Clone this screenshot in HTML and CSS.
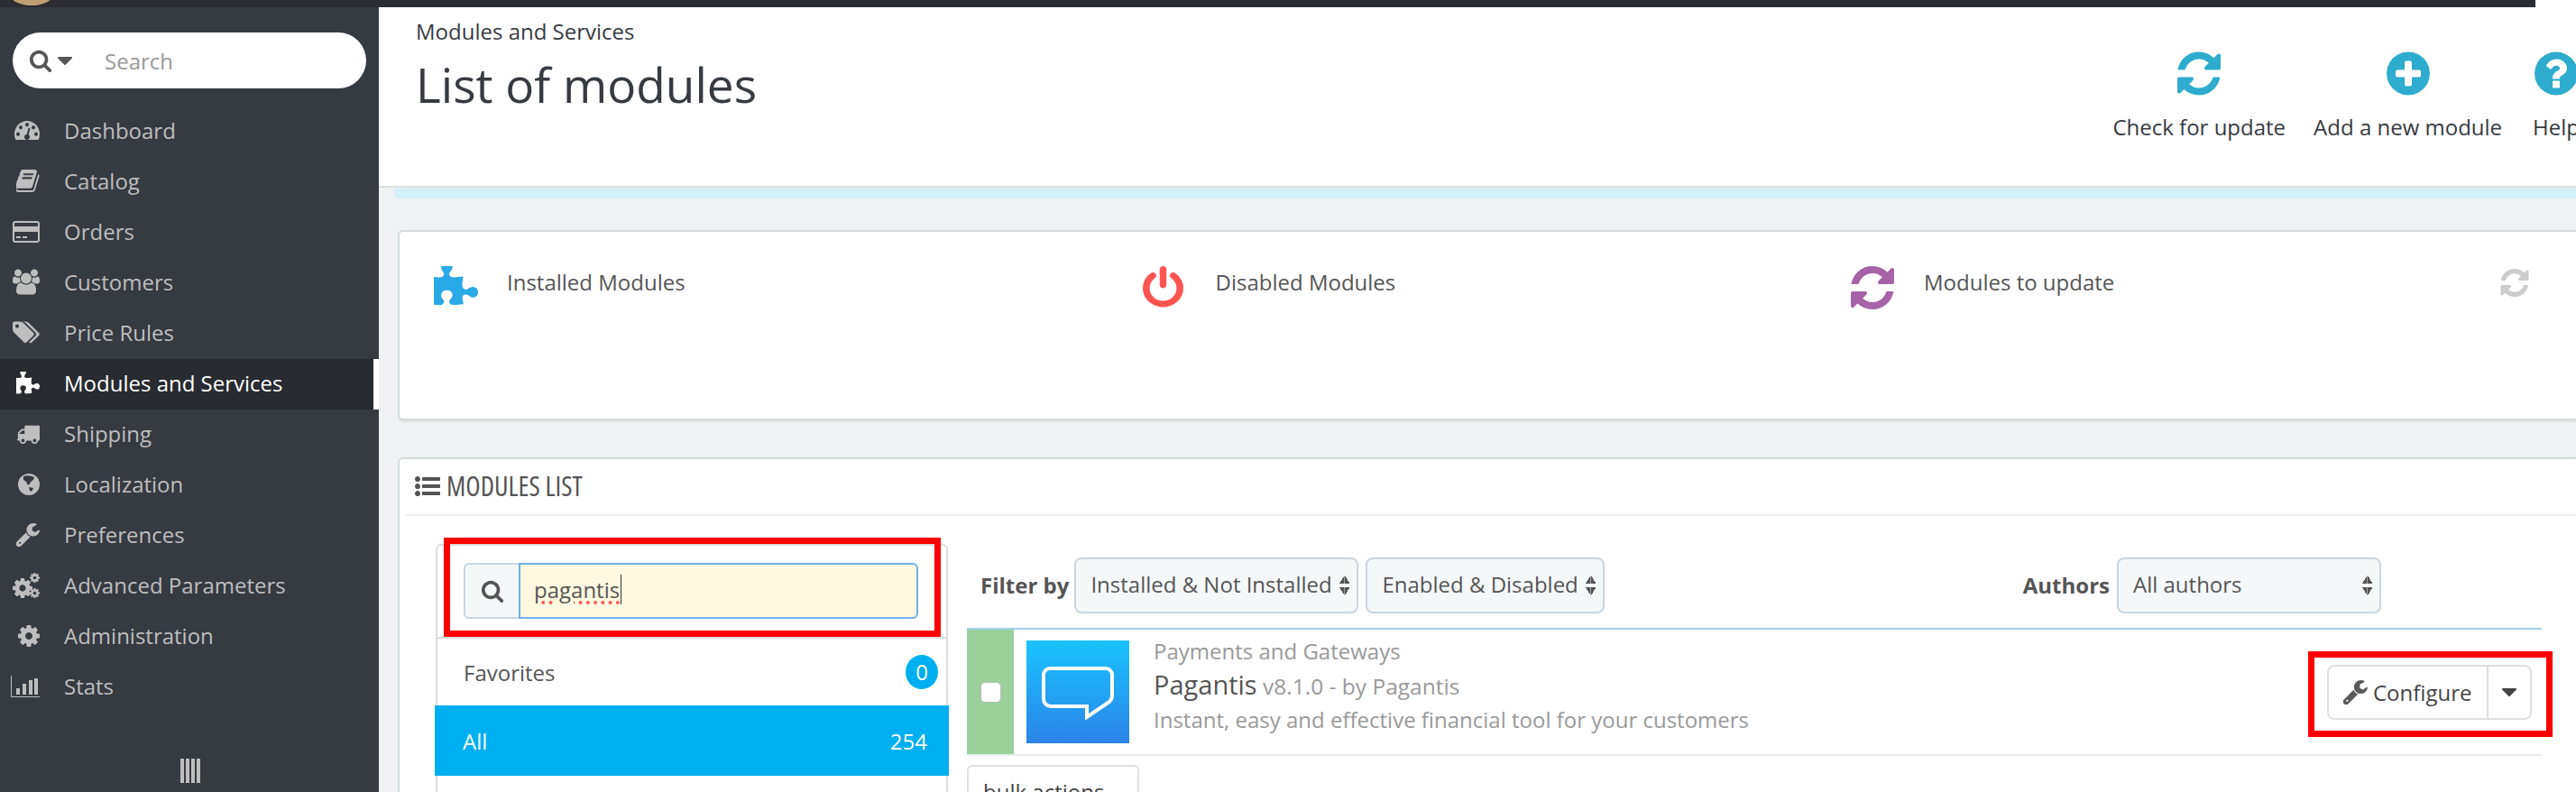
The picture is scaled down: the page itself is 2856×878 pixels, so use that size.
FILE: index.html

```html
<!DOCTYPE html>
<html>
<head>
<meta name="viewport" content="width=device-width, initial-scale=1">
<title>List of modules</title>
<link rel="stylesheet" href="styles.css">
</head>
<body>

<svg class="sprite" xmlns="http://www.w3.org/2000/svg">
  <symbol id="i-search" viewBox="0 0 1792 1792"><path d="M1216 832q0-185-131.500-316.500t-316.500-131.500-316.500 131.500-131.500 316.500 131.500 316.500 316.500 131.500 316.500-131.500 131.500-316.500zm512 832q0 52-38 90t-90 38q-54 0-90-38l-343-342q-179 124-399 124-143 0-273.500-55.500t-225-150-150-225-55.500-273.500 55.500-273.500 150-225 225-150 273.500-55.500 273.500 55.500 225 150 150 225 55.500 273.500q0 220-124 399l343 343q37 37 37 90z"/></symbol>
  <symbol id="i-caret" viewBox="384 640 1024 576"><path d="M1408 704q0 26-19 45l-448 448q-19 19-45 19t-45-19l-448-448q-19-19-19-45t19-45 45-19h896q26 0 45 19t19 45z"/></symbol>
  <symbol id="i-refresh" viewBox="128 128 1536 1536"><path d="M1639 1056q0 5-1 7-64 268-268 434.500t-478 166.500q-146 0-282.500-55t-243.500-157l-129 129q-19 19-45 19t-45-19-19-45v-448q0-26 19-45t45-19h448q26 0 45 19t19 45-19 45l-137 137q71 66 161 102t187 36q134 0 250-65t186-179q11-17 53-117 8-23 30-23h192q13 0 22.500 9.500t9.500 22.500zm25-800v448q0 26-19 45t-45 19h-448q-26 0-45-19t-19-45 19-45l138-138q-148-137-349-137-134 0-250 65t-186 179q-11 17-53 117-8 23-30 23h-199q-13 0-22.500-9.500t-9.500-22.500v-7q65-268 270-434.500t480-166.500q146 0 284 55.500t245 156.500l130-129q19-19 45-19t45 19 19 45z"/></symbol>
  <symbol id="i-plus" viewBox="128 128 1536 1536"><path d="M1344 960v-128q0-26-19-45t-45-19h-256v-256q0-26-19-45t-45-19h-128q-26 0-45 19t-19 45v256h-256q-26 0-45 19t-19 45v128q0 26 19 45t45 19h256v256q0 26 19 45t45 19h128q26 0 45-19t19-45v-256h256q26 0 45-19t19-45zm320-64q0 209-103 385.500t-279.500 279.500-385.500 103-385.500-103-279.500-279.500-103-385.500 103-385.500 279.500-279.500 385.500-103 385.500 103 279.500 279.500 103 385.500z"/></symbol>
  <symbol id="i-help" viewBox="128 128 1536 1536"><path d="M1024 1376v-192q0-14-9-23t-23-9h-192q-14 0-23 9t-9 23v192q0 14 9 23t23 9h192q14 0 23-9t9-23zm256-672q0-88-55.500-163t-138.500-116-170-41q-243 0-371 213-15 24 8 42l132 100q7 6 19 6 16 0 25-12 53-68 86-92 34-24 86-24 48 0 85.500 26t37.500 59q0 38-20 61t-68 45q-63 28-115.500 86.500t-52.500 125.500v36q0 14 9 23t23 9h192q14 0 23-9t9-23q0-19 21.500-49.500t54.500-49.500q32-18 49-28.500t46-35 44.500-48 28-60.500 12.500-81zm384 192q0 209-103 385.500t-279.500 279.500-385.500 103-385.500-103-279.500-279.500-103-385.500 103-385.500 279.500-279.500 385.500-103 385.500 103 279.500 279.500 103 385.500z"/></symbol>
  <symbol id="i-wrench" viewBox="128 128 1600 1600"><path d="M448 1472q0-26-19-45t-45-19-45 19-19 45 19 45 45 19 45-19 19-45zm644-420l-682 682q-37 37-90 37-52 0-91-37l-106-108q-38-36-38-90 0-53 38-91l681-681q39 98 114.500 173.500t173.500 114.500zm634-435q0 39-23 106-47 134-164.500 217.500t-258.500 83.500q-185 0-316.500-131.500t-131.500-316.500 131.500-316.500 316.500-131.500q58 0 121.500 16.500t107.500 46.500q16 11 16 28t-16 28l-293 169v224l193 107q5-3 79-48.500t135.500-81 70.500-35.500q15 0 23.500 10t8.500 25z"/></symbol>
  <symbol id="i-puzzle" viewBox="128 128 1536 1536" preserveAspectRatio="none"><path d="M1664 1098q0 81-44.500 135t-123.500 54q-41 0-77.500-17.500t-59-38-56.500-38-71-17.500q-110 0-110 124 0 39 16 115t15 115v5q-22 0-33 1-34 3-97.500 11.500t-115.500 13.500-98 5q-61 0-103-26.500t-42-83.500q0-37 17.500-71t38-56.500 38-59 17.500-77.500q0-79-54-123.500t-135-44.500q-84 0-143 45.500t-59 127.500q0 43 15 83t33.500 64.500 33.500 53 15 50.500q0 45-46 89-37 35-117 35-95 0-245-24-9-2-27.500-4t-27.500-4l-13-2q-1 0-3-1-2 0-2-1v-1024q2 1 17.500 3.500t34 5 21.500 3.500q150 24 245 24 80 0 117-35 46-44 46-89 0-22-15-50.500t-33.500-53-33.500-64.500-15-83q0-82 59-127.500t144-45.500q80 0 134 44.500t54 123.500q0 41-17.500 77.500t-38 59-38 56.500-17.500 71q0 57 42 83.500t103 26.500q64 0 180-15t163-17v2q-1 2-3.500 17.500t-5 34-3.500 21.500q-24 150-24 245 0 80 35 117 44 46 89 46 22 0 50.500-15t53-33.500 64.500-33.500 83-15q82 0 127.500 59t45.500 143z"/></symbol>
  <symbol id="i-power" viewBox="128 0 1536 1792" preserveAspectRatio="none"><path d="M1664 896q0 156-61 298t-164 245-245 164-298 61-298-61-245-164-164-245-61-298q0-182 80.500-343t226.500-270q43-32 95.500-25t83.500 50q32 42 24.500 94.500t-49.500 84.500q-98 74-151.500 181t-53.500 228q0 104 40.500 198.500t109.500 163.500 163.500 109.500 198.500 40.500 198.500-40.500 163.500-109.500 109.500-163.500 40.500-198.500q0-121-53.500-228t-151.500-181q-42-32-49.500-84.500t24.500-94.500q31-43 84-50t95 25q146 109 226.500 270t80.500 343zm-640-768v640q0 52-38 90t-90 38-90-38-38-90v-640q0-52 38-90t90-38 90 38 38 90z"/></symbol>
  <symbol id="i-list" viewBox="0 192 1792 1408" preserveAspectRatio="none"><path d="M384 1408q0 80-56 136t-136 56-136-56-56-136 56-136 136-56 136 56 56 136zm0-512q0 80-56 136t-136 56-136-56-56-136 56-136 136-56 136 56 56 136zm1408 416v192q0 13-9.500 22.500t-22.500 9.500h-1216q-13 0-22.500-9.500t-9.500-22.500v-192q0-13 9.500-22.500t22.500-9.500h1216q13 0 22.500 9.500t9.500 22.500zm-1408-928q0 80-56 136t-136 56-136-56-56-136 56-136 136-56 136 56 56 136zm1408 416v192q0 13-9.500 22.500t-22.500 9.500h-1216q-13 0-22.500-9.500t-9.500-22.500v-192q0-13 9.500-22.500t22.500-9.500h1216q13 0 22.500 9.500t9.500 22.500zm0-512v192q0 13-9.500 22.500t-22.500 9.500h-1216q-13 0-22.500-9.500t-9.500-22.500v-192q0-13 9.500-22.500t22.500-9.500h1216q13 0 22.500 9.500t9.500 22.500z"/></symbol>
  <symbol id="i-dash" viewBox="0 256 1792 1280" preserveAspectRatio="none"><path d="M384 1152q0-53-37.500-90.500t-90.500-37.500-90.500 37.500-37.500 90.500 37.500 90.500 90.500 37.500 90.500-37.500 37.500-90.500zm192-448q0-53-37.500-90.500t-90.500-37.500-90.500 37.500-37.500 90.500 37.500 90.500 90.500 37.500 90.500-37.500 37.500-90.500zm428 481l101-382q6-26-7.500-48.500t-38.500-29.500-48 6.500-30 39.500l-101 382q-60 5-107 43.500t-63 98.500q-20 77 20 146t117 89 146-20 89-117q16-60-6-117t-72-91zm660-33q0-53-37.500-90.500t-90.500-37.500-90.500 37.500-37.500 90.500 37.500 90.500 90.500 37.500 90.500-37.500 37.500-90.500zm-640-640q0-53-37.500-90.500t-90.500-37.500-90.500 37.500-37.500 90.500 37.500 90.500 90.500 37.500 90.500-37.500 37.500-90.500zm448 192q0-53-37.500-90.500t-90.500-37.500-90.500 37.500-37.500 90.500 37.500 90.500 90.500 37.500 90.500-37.500 37.500-90.500zm320 448q0 261-141 483-19 29-54 29h-1402q-35 0-54-29-141-221-141-483 0-182 71-348t191-286 286-191 348-71 348 71 286 191 191 286 71 348z"/></symbol>
  <symbol id="i-book" viewBox="128 128 1536 1536"><path d="M1639 478q40 57 18 129l-275 906q-19 64-76.500 107.500t-122.500 43.500h-923q-77 0-148.500-53.500t-99.500-131.500q-24-67-2-127 0-4 3-27t4-37q1-8-3-21.500t-3-19.500q2-11 8-21t16.500-23.500 16.500-23.500q23-38 45-91.500t30-91.500q3-10 .5-30t-.5-28q3-11 17-28t17-23q21-36 42-92t25-90q1-9-2.500-32t.5-28q4-13 22-30.500t22-22.500q19-26 42.500-84.500t27.500-96.500q1-8-3-25.500t-2-26.500q2-8 9-18t18-23 17-21q8-12 16.500-30.500t15-35 16-36 19.500-32 26.500-23.500 36-11.500 47.500 5.500l-1 3q38-9 51-9h761q74 0 114 56t18 130l-274 906q-36 119-71.500 153.500t-128.500 34.500h-869q-27 0-38 15-11 16-1 43 24 70 144 70h923q29 0 56-15.500t35-41.500l300-987q7-22 5-57 38 15 59 43zm-1064 2q-4 13 2 22.500t20 9.500h608q13 0 25.500-9.500t16.500-22.500l21-64q4-13-2-22.500t-20-9.500h-608q-13 0-25.500 9.500t-16.500 22.500zm-83 256q-4 13 2 22.500t20 9.500h608q13 0 25.500-9.500t16.500-22.500l21-64q4-13-2-22.500t-20-9.500h-608q-13 0-25.500 9.500t-16.500 22.500z"/></symbol>
  <symbol id="i-users" viewBox="0 128 1920 1536"><path d="M593 896q-162 5-265 128h-134q-82 0-138-40.500t-56-118.500q0-353 124-353 6 0 43.500 21t97.500 42.500 119 21.500q67 0 133-23-5 37-5 66 0 139 81 256zm1071 637q0 120-73 189.500t-194 69.500h-874q-121 0-194-69.500t-73-189.500q0-53 3.500-103.500t14-109 26.500-108.500 43-97.500 62-81 85.500-53.500 111.500-20q10 0 43 21.500t73 48 107 48 135 21.500 135-21.500 107-48 73-48 43-21.500q61 0 111.500 20t85.500 53.500 62 81 43 97.500 26.500 108.500 14 109 3.500 103.500zm-1024-1277q0 106-75 181t-181 75-181-75-75-181 75-181 181-75 181 75 75 181zm704 384q0 159-112.500 271.500t-271.500 112.500-271.500-112.500-112.500-271.500 112.500-271.500 271.500-112.500 271.500 112.500 112.500 271.500zm576 225q0 78-56 118.500t-138 40.500h-134q-103-123-265-128 81-117 81-256 0-29-5-66 66 23 133 23 59 0 119-21.500t97.500-42.500 43.500-21q124 0 124 353zm-128-609q0 106-75 181t-181 75-181-75-75-181 75-181 181-75 181 75 75 181z"/></symbol>
  <symbol id="i-tags" viewBox="0 128 1920 1536"><path d="M448 448q0-53-37.500-90.500t-90.500-37.500-90.500 37.500-37.500 90.500 37.500 90.500 90.500 37.500 90.500-37.500 37.500-90.500zm1067 576q0 53-37 90l-491 492q-39 37-91 37-53 0-90-37l-715-716q-38-37-64.500-101t-26.500-117v-416q0-52 38-90t90-38h416q53 0 117 26.500t102 64.500l715 714q37 39 37 91zm384 0q0 53-37 90l-491 492q-39 37-91 37-36 0-59-14t-53-45l470-470q37-37 37-90 0-52-37-91l-715-714q-38-38-102-64.500t-117-26.500h224q53 0 117 26.500t102 64.500l715 714q37 39 37 91z"/></symbol>
  <symbol id="i-truck" viewBox="0 192 1792 1344"><path d="M640 1408q0-52-38-90t-90-38-90 38-38 90 38 90 90 38 90-38 38-90zm-384-512h384v-256h-158q-13 0-22 9l-195 195q-9 9-9 22v30zm1280 512q0-52-38-90t-90-38-90 38-38 90 38 90 90 38 90-38 38-90zm256-1088v1024q0 15-4 26.500t-13.500 18.500-16.500 11.500-23.500 6-22.500 2-25.500 0-22.500-.5q0 106-75 181t-181 75-181-75-75-181h-384q0 106-75 181t-181 75-181-75-75-181h-64q-3 0-22.500.5t-25.500 0-22.500-2-23.500-6-16.500-11.500-13.500-18.500-4-26.500q0-26 19-45t45-19v-320q0-8-.5-35t0-38 2.500-34.500 6.500-37 14-30.500 22.500-30l198-198q19-19 50.500-32t58.500-13h160v-192q0-26 19-45t45-19h1024q26 0 45 19t19 45z"/></symbol>
  <symbol id="i-cog" viewBox="128 128 1536 1536"><path id="cog-shape" d="M1152 896q0-106-75-181t-181-75-181 75-75 181 75 181 181 75 181-75 75-181zm512-109v222q0 12-8 23t-20 13l-185 28q-19 54-39 91 35 50 107 138 10 12 10 25t-9 23q-27 37-99 108t-94 71q-12 0-26-9l-138-108q-44 23-91 38-16 136-29 186-7 28-36 28h-222q-14 0-24.500-8.500t-11.500-21.500l-28-184q-49-16-90-37l-141 107q-10 9-25 9-14 0-25-11-126-114-165-168-7-10-7-23 0-12 8-23 15-21 51-66.500t54-70.500q-27-50-41-99l-183-27q-13-2-21-12.500t-8-23.500v-222q0-12 8-23t19-13l186-28q14-46 39-92-40-57-107-138-10-12-10-24 0-10 9-23 26-36 98.500-107.500t94.500-71.500q13 0 26 10l138 107q44-23 91-38 16-136 29-186 7-28 36-28h222q14 0 24.500 8.500t11.500 21.500l28 184q49 16 90 37l142-107q9-9 24-9 13 0 25 10 129 119 165 170 7 8 7 22 0 12-8 23-15 21-51 66.500t-54 70.500q26 50 41 98l183 28q13 2 21 12.500t8 23.500z"/></symbol>
  <symbol id="i-cogs" viewBox="0 0 30 28">
    <svg x="0" y="6" width="22" height="22" viewBox="128 128 1536 1536"><use href="#cog-shape"/></svg>
    <svg x="19" y="0" width="11" height="11" viewBox="128 128 1536 1536"><use href="#cog-shape"/></svg>
    <svg x="19" y="17" width="11" height="11" viewBox="128 128 1536 1536"><use href="#cog-shape"/></svg>
  </symbol>
</svg>

<div class="topbar"><span class="avatar"></span></div>

<div class="page">
  <nav class="sidebar">
    <div class="quick-search">
      <svg class="qs-icon"><use href="#i-search"/></svg>
      <svg class="qs-caret"><use href="#i-caret"/></svg>
      <span class="qs-text">Search</span>
    </div>
    <ul class="menu">
      <li class="menu-item"><span class="menu-icon"><svg width="28" height="21"><use href="#i-dash"/></svg></span>Dashboard</li>
      <li class="menu-item"><span class="menu-icon"><svg width="26" height="25"><use href="#i-book"/></svg></span>Catalog</li>
      <li class="menu-item"><span class="menu-icon">
        <svg width="30" height="24" viewBox="0 0 30 24"><rect x="1" y="1" width="28" height="22" rx="2" fill="none" stroke="currentColor" stroke-width="2"/><rect x="1" y="6" width="28" height="6"/><rect x="4" y="17" width="5" height="2"/><rect x="11" y="17" width="5" height="2"/></svg>
      </span>Orders</li>
      <li class="menu-item"><span class="menu-icon"><svg width="30" height="29"><use href="#i-users"/></svg></span>Customers</li>
      <li class="menu-item"><span class="menu-icon"><svg width="30" height="25"><use href="#i-tags"/></svg></span>Price Rules</li>
      <li class="menu-item active"><span class="menu-icon"><svg width="26" height="26"><use href="#i-puzzle"/></svg></span>Modules and Services</li>
      <li class="menu-item"><span class="menu-icon"><svg width="26" height="23"><use href="#i-truck"/></svg></span>Shipping</li>
      <li class="menu-item"><span class="menu-icon">
        <svg width="24" height="24" viewBox="0 0 24 24"><circle cx="12" cy="12" r="12"/><path class="land" d="M6 3Q12 1 18 4L17 7Q14 8 14 10L11 13L9 9L6 7ZM12 15L17 16L15 20L13 19Z"/></svg>
      </span>Localization</li>
      <li class="menu-item"><span class="menu-icon"><svg width="26" height="26"><use href="#i-wrench"/></svg></span>Preferences</li>
      <li class="menu-item"><span class="menu-icon"><svg width="30" height="28"><use href="#i-cogs"/></svg></span>Advanced Parameters</li>
      <li class="menu-item"><span class="menu-icon"><svg width="24" height="24"><use href="#i-cog"/></svg></span>Administration</li>
      <li class="menu-item"><span class="menu-icon">
        <svg width="32" height="24" viewBox="0 0 32 24"><rect x="0" y="0" width="1" height="24"/><rect x="0" y="23" width="32" height="1"/><rect x="6" y="14" width="4" height="7"/><rect x="13" y="9" width="4" height="12"/><rect x="20" y="5" width="4" height="16"/><rect x="26" y="3" width="4" height="18"/></svg>
      </span>Stats</li>
    </ul>
    <div class="collapse-handle"><i></i><i></i><i></i><i></i></div>
  </nav>

  <main class="content">
    <header class="page-head">
      <div class="page-title">
        <div class="crumb">Modules and Services</div>
        <h1>List of modules</h1>
      </div>
      <div class="toolbar">
        <a class="tool"><svg><use href="#i-refresh"/></svg>Check for update</a>
        <a class="tool"><svg><use href="#i-plus"/></svg>Add a new module</a>
        <a class="tool tool-help"><svg><use href="#i-help"/></svg>Help</a>
      </div>
    </header>
    <div class="notice"></div>

    <section class="card stats">
      <div class="stat"><svg class="stat-icon c-puzzle" width="49" height="46"><use href="#i-puzzle"/></svg><span>Installed Modules</span></div>
      <div class="stat"><svg class="stat-icon c-power" width="45" height="49"><use href="#i-power"/></svg><span>Disabled Modules</span></div>
      <div class="stat"><svg class="stat-icon c-update" width="48" height="48"><use href="#i-refresh"/></svg><span>Modules to update</span></div>
      <svg class="stat-refresh" width="32" height="31"><use href="#i-refresh"/></svg>
    </section>

    <section class="card modules">
      <h3 class="card-head"><svg width="28" height="22"><use href="#i-list"/></svg>MODULES LIST</h3>
      <div class="card-body">
        <aside class="cats">
          <div class="cats-search">
            <div class="input-group">
              <span class="addon"><svg width="26" height="26"><use href="#i-search"/></svg></span>
              <div class="search-input"><span class="typed">pagantis</span></div>
            </div>
          </div>
          <div class="cat"><span>Favorites</span><span class="badge">0</span></div>
          <div class="cat selected"><span>All</span><span>254</span></div>
        </aside>

        <div class="list">
          <div class="filters">
            <b class="filter-label">Filter by</b>
            <div class="select sel-status">Installed &amp; Not Installed<span class="updown"></span></div>
            <div class="select sel-enabled">Enabled &amp; Disabled<span class="updown"></span></div>
            <b class="filter-label authors">Authors</b>
            <div class="select sel-authors">All authors<span class="updown"></span></div>
          </div>

          <div class="module-row">
            <div class="row-check"><span class="checkbox"></span></div>
            <div class="logo">
              <svg width="114" height="114" viewBox="0 0 114 114"><path d="M26 31H88a7 7 0 0 1 7 7V62a9 9 0 0 1-3 6L67 85V73H27a8 8 0 0 1-8-8V38a7 7 0 0 1 7-7Z" fill="none" stroke="#fff" stroke-width="4"/></svg>
            </div>
            <div class="info">
              <div class="info-cat">Payments and Gateways</div>
              <div class="info-name"><span>Pagantis</span> v8.1.0 - by Pagantis</div>
              <div class="info-desc">Instant, easy and effective financial tool for your customers</div>
            </div>
            <div class="btn-group">
              <a class="btn-main"><svg width="27" height="27"><use href="#i-wrench"/></svg>Configure</a>
              <a class="btn-more"><svg width="16" height="9"><use href="#i-caret"/></svg></a>
            </div>
          </div>

          <div class="bulk">bulk actions</div>
        </div>
      </div>
    </section>
  </main>
</div>

<div class="mark mark-search"></div>
<div class="mark mark-configure"></div>

</body>
</html>
```

FILE: styles.css

```css
* {
    box-sizing: border-box;
}

html, body {
    margin: 0;
    height: 878px;
    overflow: hidden;
    background: #fff;
}

body {
    position: relative;
    font-family: "Open Sans", Arial, sans-serif;
    font-size: 24px;
    color: #555;
}

svg {
    fill: currentColor;
    display: block;
}

.sprite {
    position: absolute;
    width: 0;
    height: 0;
}

/* top strip */
.topbar {
    height: 8px;
    margin-right: 45px;
    background: #2b2d33;
    overflow: hidden;
    position: relative;
}

.avatar {
    position: absolute;
    left: 12px;
    top: -16px;
    width: 46px;
    height: 22px;
    border-radius: 50%;
    background: #bfa072;
}

.page {
    display: flex;
    height: 870px;
}

/* sidebar */
.sidebar {
    width: 420px;
    flex: none;
    background: #363a41;
    padding-top: 28px;
    position: relative;
    color: #bebebe;
}

.quick-search {
    margin: 0 14px;
    height: 62px;
    border-radius: 31px;
    background: #fff;
    display: flex;
    align-items: center;
    padding-left: 18px;
}

.qs-icon {
    width: 26px;
    height: 26px;
    color: #555;
}

.qs-caret {
    width: 16px;
    height: 9px;
    margin: 0 0 0 6px;
    color: #555;
}

.qs-text {
    margin-left: 36px;
    color: #999;
}

.menu {
    list-style: none;
    margin: 20px 0 0;
    padding: 0;
}

.menu-item {
    height: 56px;
    display: flex;
    align-items: center;
    padding: 0 0 3px 12px;
}

.menu-icon {
    width: 32px;
    margin-right: 27px;
    display: flex;
    justify-content: flex-end;
}

.land {
    fill: #363a41;
}

.menu-item.active {
    color: #fff;
    background: #282b30;
    border-right: 6px solid #fff;
}

.collapse-handle {
    position: absolute;
    left: 200px;
    top: 833px;
    display: flex;
    gap: 2px;
}

.collapse-handle i {
    width: 4px;
    height: 27px;
    background: #bebebe;
}

/* main column */
.content {
    flex: 1;
    min-width: 0;
    background: #eff1f2;
    overflow: hidden;
}

.page-head {
    height: 200px;
    background: #fff;
    border-bottom: 2px solid #ddd;
    display: flex;
    justify-content: space-between;
    padding-left: 41px;
    color: #363a41;
}

.crumb {
    margin-top: 11px;
    line-height: 32px;
}

h1 {
    margin: 7px 0 0;
    font-size: 53.2px;
    font-weight: 400;
    line-height: 72px;
}

.toolbar {
    display: flex;
    gap: 31px;
    margin-right: -4px;
    padding-top: 49px;
}

.tool {
    display: flex;
    flex-direction: column;
    align-items: center;
    white-space: nowrap;
}

.tool svg {
    width: 48px;
    height: 49px;
    margin-bottom: 18px;
    color: #2eacce;
}

.tool-help {
    margin-left: 3px;
}

.notice {
    height: 12px;
    margin-left: 17px;
    background: #d2f0f6;
    border-bottom-left-radius: 6px;
}

.card {
    margin: 0 -4px 0 21px;
    background: #fff;
    border: 2px solid #d3dbdb;
    border-radius: 6px;
    box-shadow: 0 2px 0 rgba(195, 205, 205, .4);
}

.stats {
    margin-top: 35px;
    height: 211px;
    display: flex;
    align-items: flex-start;
    padding: 38px 0 0 38px;
}

.stat {
    width: 785.5px;
    display: flex;
    flex: none;
}

.stat span {
    line-height: 36px;
}

.stat-icon {
    margin-right: 32px;
    flex: none;
}

.stat:nth-child(2) .stat-icon {
    margin-right: 36px;
}

.stat:nth-child(3) .stat-icon {
    margin-right: 33px;
}

.c-puzzle { color: #29a9e6; }
.c-power { color: #ff5450; }
.c-update { color: #a763a7; }

.stat-refresh {
    position: absolute;
    left: 2772px;
    top: 298px;
    color: #ccc;
}

.modules {
    margin-top: 41px;
    height: 500px;
}

.card-head {
    margin: 0 0 0 7px;
    height: 63px;
    border-bottom: 2px solid #eee;
    padding: 0 0 2px 10px;
    display: flex;
    align-items: center;
    gap: 7px;
    font-size: 30px;
    font-weight: 400;
    font-stretch: 75%;
    color: #555;
}

.card-body {
    display: flex;
    padding: 31px 0 0 40px;
}

/* categories */
.cats {
    width: 568px;
    height: 400px;
    flex: none;
    border: 2px solid #ddd;
    border-radius: 6px 6px 0 0;
}

.cats-search {
    height: 103px;
    padding: 19px 31px 0 29px;
    border-bottom: 2px solid #ddd;
}

.input-group {
    display: flex;
    height: 62px;
}

.addon {
    width: 61px;
    flex: none;
    background: #f5f8f9;
    border: 2px solid #c7d6df;
    border-right: 0;
    border-radius: 6px 0 0 6px;
    display: flex;
    align-items: center;
    justify-content: center;
    color: #555;
}

.search-input {
    flex: 1;
    background: #fef9e0;
    border: 2px solid #6eb0e8;
    border-radius: 0 6px 6px 0;
    padding-left: 15px;
    line-height: 56px;
}

.typed {
    border-right: 1px solid #333;
    padding-right: 1px;
    text-decoration: underline dotted #ff5a50;
    text-decoration-thickness: 4px;
    text-underline-offset: 3px;
}

.cat {
    display: flex;
    align-items: center;
    justify-content: space-between;
    height: 74px;
    padding: 0 9px 0 29px;
}

.badge {
    width: 36px;
    height: 38px;
    border-radius: 50%;
    background: #00aff0;
    color: #fff;
    text-align: center;
    line-height: 38px;
}

.cat.selected {
    height: 78px;
    margin: 0 -3px;
    padding: 0 24px 0 31px;
    background: #00aff0;
    color: #fff;
}

/* right list */
.list {
    flex: none;
    width: 1746px;
    margin-left: 21px;
}

.filters {
    display: flex;
    align-items: center;
    height: 62px;
    margin-top: 15px;
    padding-left: 15px;
}

.filter-label {
    margin: 0 6px 2px 0;
    font-weight: 700;
}

.filter-label.authors {
    margin-left: auto;
    margin-right: 8px;
}

.select {
    position: relative;
    height: 62px;
    background: #f5f8f9;
    border: 2px solid #c7d6df;
    border-radius: 8px;
    padding-left: 16px;
    line-height: 56px;
    margin-right: 8px;
}

.sel-status { width: 315px; }
.sel-enabled { width: 265px; }
.sel-authors { width: 293px; margin-right: 178px; }

.updown {
    position: absolute;
    right: 8px;
    top: 18px;
    width: 11px;
    height: 22px;
    background:
        linear-gradient(to bottom right, transparent 49%, #555 50%) 0 0 / 50% 9px no-repeat,
        linear-gradient(to bottom left, transparent 49%, #555 50%) 100% 0 / 50% 9px no-repeat,
        linear-gradient(to top right, transparent 49%, #555 50%) 0 100% / 50% 9px no-repeat,
        linear-gradient(to top left, transparent 49%, #555 50%) 100% 100% / 50% 9px no-repeat;
}

.module-row {
    display: flex;
    align-items: center;
    height: 142px;
    margin-top: 16px;
    border-top: 2px solid #a0cfe8;
    border-bottom: 2px solid #e8edf0;
}

.row-check {
    align-self: stretch;
    width: 52px;
    flex: none;
    background: #9ad09a;
    display: flex;
    align-items: center;
    justify-content: center;
}

.checkbox {
    width: 23px;
    height: 23px;
    background: #fff;
    border: 1px solid #bbb;
    border-radius: 5px;
}

.logo {
    width: 114px;
    height: 114px;
    flex: none;
    margin: 0 27px 0 14px;
    background: linear-gradient(#1ac3ff, #2b84e8);
}

.info {
    flex: 1;
    color: #999;
    line-height: 37px;
    padding-bottom: 16px;
}

.info-name {
    font-size: 24.5px;
}

.info-name span {
    font-size: 29px;
    color: #555;
}

.btn-group {
    display: flex;
    width: 227px;
    height: 61px;
    margin-right: 11px;
    border: 2px solid #e0e0e0;
    border-radius: 8px;
    color: #444;
}

.btn-main {
    width: 177px;
    display: flex;
    align-items: center;
    padding-left: 16px;
    gap: 6px;
    border-right: 2px solid #e0e0e0;
}

.btn-main svg {
    color: #5a5a5a;
}

.btn-more {
    flex: 1;
    display: flex;
    align-items: center;
    justify-content: center;
}

.bulk {
    width: 191px;
    height: 60px;
    margin-top: 10px;
    border: 2px solid #e0e0e0;
    border-radius: 6px;
    padding-left: 16px;
    line-height: 56px;
    color: #444;
}

/* red annotation boxes drawn over the screenshot */
.mark {
    position: absolute;
    border: 7px solid #f00;
}

.mark-search {
    left: 492px;
    top: 596px;
    width: 551px;
    height: 110px;
}

.mark-configure {
    left: 2559px;
    top: 722px;
    width: 271px;
    height: 95px;
}
```
